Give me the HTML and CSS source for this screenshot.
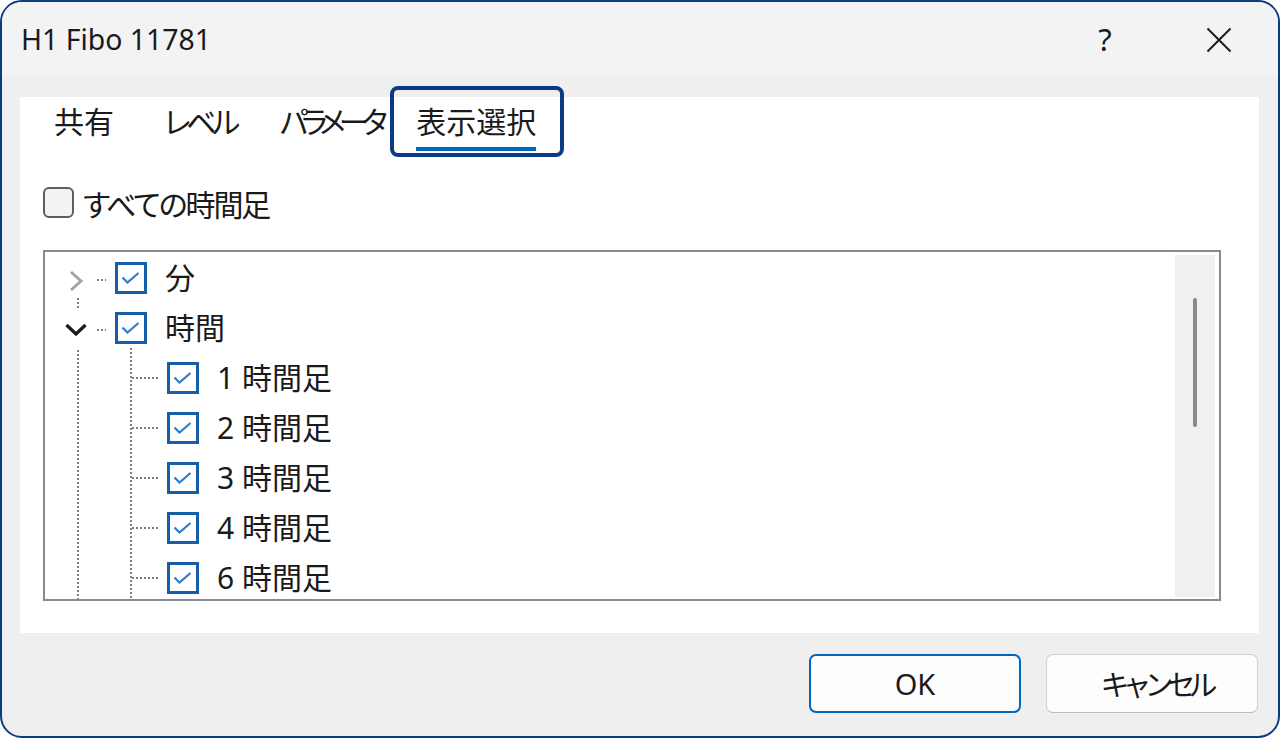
FILE: index.html
```html
<!DOCTYPE html>
<html lang="ja">
<head>
<meta charset="utf-8">
<title>H1 Fibo 11781</title>
<link rel="stylesheet" href="styles.css">
</head>
<body>
<div class="window">
  <header class="titlebar">
    <span class="title">H1 Fibo 11781</span>
    <span class="caption-btn help">?</span>
    <span class="caption-btn close">
      <svg width="26" height="26" viewBox="0 0 26 26"><path d="M1.5 1.5 L24.5 24.5 M24.5 1.5 L1.5 24.5" stroke="#1a1a1a" stroke-width="2" fill="none"/></svg>
    </span>
  </header>
  <main class="body">
    <section class="panel">
      <nav class="tabs">
        <span class="tab tab-common">共有</span>
        <span class="tab tab-level">レベル</span>
        <span class="tab tab-param">パラメータ</span>
        <span class="tab tab-visible active">表示選択</span>
      </nav>
      <label class="all-check">
        <span class="box-empty"></span>
        <span class="all-label">すべての時間足</span>
      </label>
      <div class="tree">
        <div class="tree-content">
          <div class="row root">
            <span class="expander">
              <svg width="40" height="40" viewBox="0 0 40 40"><polyline points="14,14 24,23 14,32" fill="none" stroke="#a3a3a3" stroke-width="3"/></svg>
            </span>
            <span class="hdots short"></span>
            <span class="cb"><span class="box"><svg width="26" height="26" viewBox="0 0 26 26"><polyline points="4.5,12.5 9.5,17.5 20.5,8" fill="none" stroke="#2d7cd0" stroke-width="2.2"/></svg></span></span>
            <span class="label">分</span>
          </div>
          <div class="row root">
            <span class="expander">
              <svg width="40" height="40" viewBox="0 0 40 40"><polyline points="9.5,17 19,26 28.5,17" fill="none" stroke="#1c1c1c" stroke-width="3.4"/></svg>
            </span>
            <span class="hdots short"></span>
            <span class="cb"><span class="box"><svg width="26" height="26" viewBox="0 0 26 26"><polyline points="4.5,12.5 9.5,17.5 20.5,8" fill="none" stroke="#2d7cd0" stroke-width="2.2"/></svg></span></span>
            <span class="label">時間</span>
          </div>
          <div class="row child">
            <span class="hdots long"></span>
            <span class="cb"><span class="box"><svg width="26" height="26" viewBox="0 0 26 26"><polyline points="4.5,12.5 9.5,17.5 20.5,8" fill="none" stroke="#2d7cd0" stroke-width="2.2"/></svg></span></span>
            <span class="label">1 時間足</span>
          </div>
          <div class="row child">
            <span class="hdots long"></span>
            <span class="cb"><span class="box"><svg width="26" height="26" viewBox="0 0 26 26"><polyline points="4.5,12.5 9.5,17.5 20.5,8" fill="none" stroke="#2d7cd0" stroke-width="2.2"/></svg></span></span>
            <span class="label">2 時間足</span>
          </div>
          <div class="row child">
            <span class="hdots long"></span>
            <span class="cb"><span class="box"><svg width="26" height="26" viewBox="0 0 26 26"><polyline points="4.5,12.5 9.5,17.5 20.5,8" fill="none" stroke="#2d7cd0" stroke-width="2.2"/></svg></span></span>
            <span class="label">3 時間足</span>
          </div>
          <div class="row child">
            <span class="hdots long"></span>
            <span class="cb"><span class="box"><svg width="26" height="26" viewBox="0 0 26 26"><polyline points="4.5,12.5 9.5,17.5 20.5,8" fill="none" stroke="#2d7cd0" stroke-width="2.2"/></svg></span></span>
            <span class="label">4 時間足</span>
          </div>
          <div class="row child">
            <span class="hdots long"></span>
            <span class="cb"><span class="box"><svg width="26" height="26" viewBox="0 0 26 26"><polyline points="4.5,12.5 9.5,17.5 20.5,8" fill="none" stroke="#2d7cd0" stroke-width="2.2"/></svg></span></span>
            <span class="label">6 時間足</span>
          </div>
        </div>
        <div class="scrollbar"><div class="thumb"></div></div>
      </div>
    </section>
    <footer class="buttons">
      <button class="btn btn-ok">OK</button>
      <button class="btn btn-cancel">キャンセル</button>
    </footer>
  </main>
</div>
</body>
</html>
```

FILE: styles.css
```css
* { box-sizing: border-box; }

html, body {
  margin: 0;
  padding: 0;
  width: 1280px;
  height: 738px;
  overflow: hidden;
  background: #ffffff;
}

body {
  font-family: "Noto Sans", "Noto Sans CJK JP", sans-serif;
  color: #1a1a1a;
  font-feature-settings: "palt";
}

.window {
  width: 1280px;
  height: 738px;
  border: 2px solid #0b3a86;
  border-radius: 22px;
  overflow: hidden;
  background: #efefef;
  display: flex;
  flex-direction: column;
}

/* ---------- title bar ---------- */
.titlebar {
  height: 75px;
  flex: none;
  background: #f3f3f3;
  display: flex;
  align-items: center;
  padding-left: 19px;
}

.title {
  font-family: "Noto Sans", sans-serif;
  font-size: 28.4px;
  line-height: 1;
  color: #1a1a1a;
  flex: 1;
}

.caption-btn {
  height: 75px;
  display: flex;
  align-items: center;
  justify-content: center;
}

.help {
  width: 110px;
  font-family: "Noto Sans", sans-serif;
  font-size: 31px;
  color: #1a1a1a;
  padding-bottom: 2px;
}

.close {
  width: 118px;
}

/* ---------- body ---------- */
.body {
  flex: 1;
  display: flex;
  flex-direction: column;
  padding: 20px 19px 0 18px;
}

.panel {
  background: #ffffff;
  padding: 3px 0 32px 0;
}

/* tabs */
.tabs {
  display: flex;
  align-items: flex-start;
  padding-left: 34px;
  font-family: "Noto Sans CJK JP", sans-serif;
  font-size: 30px;
}

.tab {
  position: relative;
  line-height: 40px;
  padding-bottom: 7px;
  border-bottom: 4px solid transparent;
  color: #1a1a1a;
  white-space: nowrap;
}

.tab-level { margin-left: 50px; letter-spacing: -4.4px; }
.tab-param { margin-left: 44px; letter-spacing: -6.8px; }
.tab-visible { margin-left: 35px; }

.tab.active {
  border-bottom-color: #0067c0;
}

.tab.active::before {
  content: "";
  position: absolute;
  top: -14px;
  bottom: -10px;
  left: -26px;
  right: -28px;
  border: 4px solid #0b3a86;
  border-radius: 8px;
}

/* all timeframes checkbox */
.all-check {
  display: flex;
  align-items: center;
  margin: 36px 0 0 23px;
  height: 31px;
  font-family: "Noto Sans CJK JP", sans-serif;
  font-size: 30px;
}

.box-empty {
  width: 31px;
  height: 31px;
  border: 2.5px solid #5e5e5e;
  border-radius: 6px;
  background: #f3f3f3;
  margin-right: 9px;
  flex: none;
}

.all-label {
  line-height: 1;
  letter-spacing: -2.1px;
}

/* tree */
.tree {
  margin: 32px 38px 0 23px;
  height: 351px;
  border: 2px solid #868a91;
  display: flex;
  overflow: hidden;
  background: #ffffff;
}

.tree-content {
  flex: 1;
  padding-top: 1px;
  background-image:
    repeating-linear-gradient(to bottom, #7f7f7f 0 2px, transparent 2px 4px),
    repeating-linear-gradient(to bottom, #7f7f7f 0 2px, transparent 2px 4px);
  background-size: 2px 100%, 2px 100%;
  background-position: 32px 26px, 85px 76px;
  background-repeat: no-repeat;
  font-family: "Noto Sans", "Noto Sans CJK JP", sans-serif;
  font-size: 30px;
}

.row {
  height: 50px;
  display: flex;
  align-items: center;
}

.row.root { padding-left: 12px; }
.row.child { padding-left: 87px; }

.expander {
  width: 40px;
  height: 40px;
  background: #ffffff;
  flex: none;
  display: flex;
}

.hdots {
  height: 2px;
  flex: none;
  background-image: repeating-linear-gradient(to right, #7f7f7f 0 2px, transparent 2px 4px);
}

.hdots.short { width: 9px; margin-right: 9px; margin-top: 4px; }
.hdots.long { width: 26px; margin-right: 9px; }

.cb {
  width: 32px;
  height: 40px;
  background: #ffffff;
  flex: none;
  display: flex;
  align-items: center;
}

.box {
  width: 32px;
  height: 32px;
  border: 3px solid #175ea8;
  display: block;
}

.box svg {
  display: block;
}

.label {
  margin-left: 18px;
  line-height: 1;
  color: #1a1a1a;
  white-space: nowrap;
}

.scrollbar {
  width: 40px;
  flex: none;
  margin: 3px 4px 2px 0;
  background: #f0f0f0;
  display: flex;
  justify-content: center;
  padding-top: 43px;
}

.thumb {
  width: 4px;
  height: 129px;
  background: #8a8a8a;
  border-radius: 2px;
}

/* buttons */
.buttons {
  display: flex;
  justify-content: flex-end;
  gap: 25px;
  padding: 21px 1px 0 0;
}

.btn {
  width: 212px;
  height: 59px;
  border-radius: 7px;
  background: #fdfdfd;
  font-family: "Noto Sans", "Noto Sans CJK JP", sans-serif;
  font-size: 29px;
  color: #1a1a1a;
  padding: 0;
  line-height: 1;
}

.btn-ok {
  border: 2px solid #0067c0;
}

.btn-cancel {
  border: 1.5px solid #d0d0d0;
  border-bottom-color: #bdbdbd;
  font-family: "Noto Sans CJK JP", sans-serif;
  letter-spacing: -7px;
  padding-left: 7px;
}
```
